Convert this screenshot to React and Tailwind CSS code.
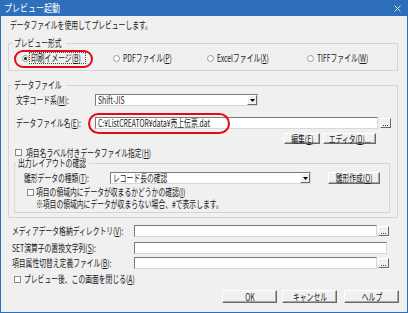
import React from "react";

const T = ({ children, className = "" }) => (
  <span className={"inline-block origin-left scale-x-[0.68] whitespace-nowrap " + className}>{children}</span>
);

const TC = ({ children }) => (
  <span className="inline-block origin-center scale-x-[0.68] whitespace-nowrap">{children}</span>
);

const U = ({ children }) => <span className="underline">{children}</span>;

function Radio({ checked }) {
  return (
    <span className="w-[7px] h-[7px] rounded-full border border-[#9a9a9a] bg-white flex items-center justify-center shrink-0">
      {checked && <span className="w-[3px] h-[3px] rounded-full bg-[#1a1a1a]" />}
    </span>
  );
}

function Check() {
  return <span className="w-[7px] h-[7px] border border-[#8a8a8a] bg-white shrink-0" />;
}

function Btn({ className = "", children }) {
  return (
    <div
      className={
        "flex items-center justify-center bg-[#f0f0f0] border border-white border-r-[#6a6a6a] border-b-[#6a6a6a] shadow-[inset_-1px_-1px_0_#a8a8a8] " +
        className
      }
    >
      <TC>{children}</TC>
    </div>
  );
}

function Dots() {
  return (
    <div className="w-[11px] h-[10px] bg-[#f0f0f0] border border-white border-r-[#6a6a6a] border-b-[#6a6a6a] flex items-end justify-center pb-[1px] shrink-0">
      <svg width="5" height="1" viewBox="0 0 5 1">
        <rect x="0" y="0" width="1" height="1" fill="#333" />
        <rect x="2" y="0" width="1" height="1" fill="#333" />
        <rect x="4" y="0" width="1" height="1" fill="#333" />
      </svg>
    </div>
  );
}

const sunken =
  "bg-white border border-t-[#7a7a7a] border-l-[#7a7a7a] border-r-[#d8d8d8] border-b-[#d8d8d8]";

function Select({ className = "", value }) {
  return (
    <div className={"h-[12px] flex items-center " + sunken + " " + className}>
      <span className="pl-[2px] flex-1">
        <T>{value}</T>
      </span>
      <div className="w-[10px] h-[10px] bg-[#f0f0f0] border border-white border-r-[#6a6a6a] border-b-[#6a6a6a] flex items-center justify-center shrink-0">
        <svg width="5" height="3" viewBox="0 0 5 3">
          <path d="M0 0 H5 L2.5 3 Z" fill="#000" />
        </svg>
      </div>
    </div>
  );
}

export default function App() {
  return (
    <div className="relative w-[408px] h-[313px] bg-[#f0f0f0] border-x border-b border-[#2d6fbb] flex flex-col font-['Noto_Sans_CJK_JP',sans-serif] text-[10px] text-[#1a1a1a] leading-none overflow-hidden">
      {/* Title bar */}
      <div className="h-[16px] bg-[#2d6fbb] flex items-center pl-[3px] pr-[6px] text-white shrink-0">
        <span className="inline-block origin-left scale-x-[0.8] whitespace-nowrap">プレビュー起動</span>
        <svg className="ml-auto" width="7" height="7" viewBox="0 0 7 7">
          <path d="M0.5 0.5 L6.5 6.5 M6.5 0.5 L0.5 6.5" stroke="#e8eef6" strokeWidth="0.9" />
        </svg>
      </div>

      {/* Intro */}
      <div className="mt-[3px] h-[12px] pl-[9px] flex items-center">
        <T>データファイルを使用してプレビューします。</T>
      </div>

      {/* Preview format */}
      <fieldset className="mt-[7px] ml-[7px] w-[390px] border border-[#d5d5d5] pb-[2px]">
        <legend className="ml-[3px] px-[2px] w-[54px] h-[10px] leading-[10px]">
          <T>プレビュー形式</T>
        </legend>
        <div className="h-[20px] flex items-center pl-[13px]">
          <div className="w-[91px] flex items-center">
            <Radio checked />
            <span className="border border-dotted border-[#444] h-[12px] w-[57px] flex items-center pl-[1px]">
              <T>
                印刷イメージ(<U>B</U>)
              </T>
            </span>
          </div>
          <div className="w-[94px] flex items-center gap-[3px]">
            <Radio />
            <T>
              PDFファイル(<U>P</U>)
            </T>
          </div>
          <div className="w-[100px] flex items-center gap-[3px]">
            <Radio />
            <T>
              Excelファイル(<U>X</U>)
            </T>
          </div>
          <div className="flex items-center gap-[3px]">
            <Radio />
            <T>
              TIFFファイル(<U>W</U>)
            </T>
          </div>
        </div>
      </fieldset>

      {/* Data file */}
      <fieldset className="mt-[9px] ml-[7px] w-[390px] border border-[#d5d5d5] pb-[4px]">
        <legend className="ml-[3px] px-[2px] w-[54px] h-[10px] leading-[10px]">
          <T>データファイル</T>
        </legend>

        <div className="mt-[4px] h-[12px] flex items-center pl-[7px]">
          <div className="w-[79px]">
            <T>
              文字コード系(<U>M</U>):
            </T>
          </div>
          <Select className="w-[163px]" value="Shift-JIS" />
        </div>

        <div className="mt-[11px] h-[12px] flex items-center pl-[7px]">
          <div className="w-[79px]">
            <T>
              データファイル名(<U>E</U>):
            </T>
          </div>
          <div className={"w-[283px] h-[12px] flex items-center pl-[2px] " + sunken}>
            <T>C:¥ListCREATOR¥data¥売上伝票.dat</T>
          </div>
          <div className="ml-[2px]">
            <Dots />
          </div>
        </div>

        <div className="mt-[4px] h-[11px] flex pl-[275px] gap-[3px]">
          <Btn className="w-[36px] h-[11px]">
            編集(<U>E</U>)
          </Btn>
          <Btn className="w-[53px] h-[11px]">
            エディタ(<U>D</U>)...
          </Btn>
        </div>

        <div className="mt-[3px] h-[11px] flex items-center pl-[6px] gap-[4px]">
          <Check />
          <T>
            項目名ラベル付きデータファイル指定(<U>H</U>)
          </T>
        </div>

        {/* Output layout */}
        <fieldset className="ml-[5px] mr-[7px] border border-[#d5d5d5]">
          <legend className="ml-[1px] px-[2px] w-[73px] h-[10px] leading-[10px]">
            <T>出力レイアウトの確認</T>
          </legend>
          <div className="mt-[4px] h-[12px] flex items-center pl-[9px]">
            <div className="w-[86px]">
              <T>
                雛形データの種類(<U>T</U>):
              </T>
            </div>
            <Select className="w-[201px]" value="レコード長の確認" />
            <Btn className="ml-[17px] w-[52px] h-[12px]">
              雛形作成(<U>O</U>)
            </Btn>
          </div>
          <div className="mt-[2px] h-[12px] flex items-center pl-[12px] gap-[2px]">
            <Check />
            <T>
              項目の領域内にデータが収まるかどうかの確認(<U>I</U>)
            </T>
          </div>
          <div className="h-[12px] mb-[2px] flex items-center pl-[21px]">
            <T>※項目の領域内にデータが収まらない場合、#で表示します。</T>
          </div>
        </fieldset>
      </fieldset>

      {/* Bottom rows */}
      <div className="mt-[7px] h-[12px] flex items-center pl-[11px]">
        <div className="w-[122px]">
          <T>
            メディアデータ格納ディレクトリ(<U>V</U>):
          </T>
        </div>
        <div className={"w-[243px] h-[12px] " + sunken} />
        <div className="ml-[1px]">
          <Dots />
        </div>
      </div>

      <div className="mt-[5px] h-[12px] flex items-center pl-[11px]">
        <div className="w-[122px]">
          <T>
            SET演算子の置換文字列(<U>S</U>):
          </T>
        </div>
        <div className={"w-[253px] h-[12px] " + sunken} />
      </div>

      <div className="mt-[3px] h-[12px] flex items-center pl-[11px]">
        <div className="w-[122px]">
          <T>
            項目属性切替え定義ファイル(<U>B</U>):
          </T>
        </div>
        <div className={"w-[243px] h-[12px] " + sunken} />
        <div className="ml-[1px]">
          <Dots />
        </div>
      </div>

      <div className="mt-[4px] h-[12px] flex items-center pl-[13px] gap-[3px]">
        <Check />
        <T>
          プレビュー後、この画面を閉じる(<U>A</U>)
        </T>
      </div>

      <div className="mt-[5px] h-[13px] flex pl-[221px]">
        <Btn className="w-[55px] h-[13px]">OK</Btn>
        <Btn className="ml-[5px] w-[55px] h-[13px]">キャンセル</Btn>
        <Btn className="ml-[7px] w-[55px] h-[13px]">ヘルプ</Btn>
      </div>

      {/* Red annotation marks */}
      <div className="absolute left-[13px] top-[50px] w-[79px] h-[18px] border-2 border-[#e50914] rounded-full pointer-events-none" />
      <div className="absolute left-[87px] top-[113px] w-[142px] h-[21px] border-2 border-[#e50914] rounded-full pointer-events-none" />
    </div>
  );
}
